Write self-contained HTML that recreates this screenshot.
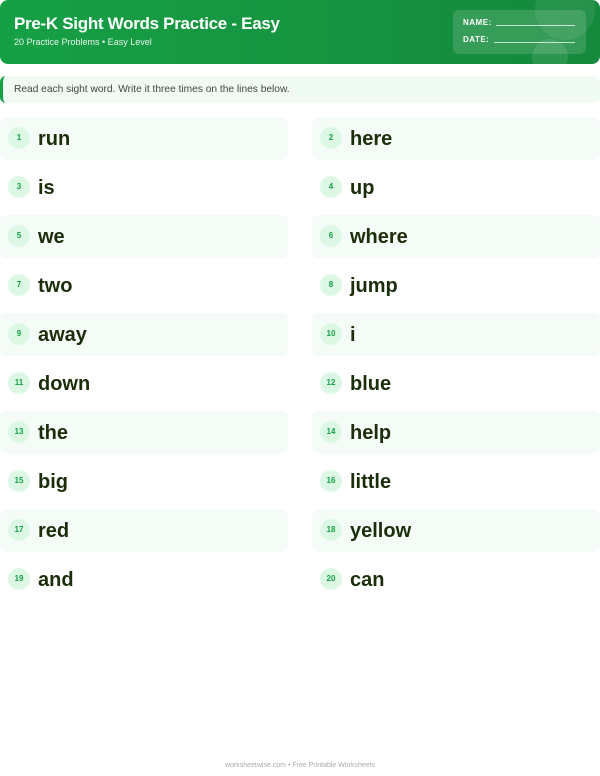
<!DOCTYPE html>
<html><head><meta charset="utf-8"><style>
*{margin:0;padding:0;box-sizing:border-box}
body{width:600px;height:776px;background:#fff;font-family:"Liberation Sans",sans-serif;position:relative;overflow:hidden}
.hdr{position:absolute;left:0;top:0;width:600px;height:64px;border-radius:8px;background:linear-gradient(90deg,#16a045,#15893c);overflow:hidden}
.hdr h1{position:absolute;left:14px;top:14px;color:#fff;font-size:17px;font-weight:bold;letter-spacing:-0.3px}
.hdr .sub{position:absolute;left:14px;top:37px;color:#e6f5ea;font-size:9px}
.c1{position:absolute;left:535px;top:-20px;width:60px;height:60px;border-radius:50%;background:rgba(255,255,255,0.08)}
.c2{position:absolute;left:532px;top:39px;width:36px;height:36px;border-radius:50%;background:rgba(255,255,255,0.1)}
.box{position:absolute;left:453px;top:10px;width:133px;height:44px;border-radius:6px;background:rgba(255,255,255,0.14)}
.box div{position:absolute;left:10px;color:#fff;font-size:8px;font-weight:bold;letter-spacing:0.5px}
.box span{position:absolute;border-bottom:1px solid rgba(255,255,255,0.7);height:1px}
.ins{position:absolute;left:0;top:76px;width:600px;height:27px;background:#f0fbf3;border-left:3px solid #16a045;border-radius:6px;font-size:10.2px;color:#444;padding:8px 0 0 11px}
.row{position:absolute;width:288px;height:43px;border-radius:6px}
.row.s{background:#f5fbf7}
.n{position:absolute;left:8px;top:10px;width:22px;height:22px;border-radius:50%;background:#dcf8e5;color:#16a045;font-size:8px;font-weight:bold;text-align:center;line-height:22px}
.w{position:absolute;left:38px;top:11px;font-size:20px;font-weight:bold;color:#1a2e0a}
.ft{position:absolute;top:762px;left:0;width:600px;text-align:center;font-size:7px;color:#aaa}
</style></head><body>
<div class="hdr"><h1>Pre-K Sight Words Practice - Easy</h1><div class="sub">20 Practice Problems • Easy Level</div>
<div class="c1"></div>
<div class="box"><div style="top:8px">NAME:</div><span style="left:43px;width:79px;top:15px"></span><div style="top:25px">DATE:</div><span style="left:41px;width:81px;top:32px"></span></div>
<div class="c2"></div></div>
<div class="ins">Read each sight word. Write it three times on the lines below.</div>
<div class="row s" style="left:0;top:117px"><div class="n">1</div><div class="w">run</div></div>
<div class="row s" style="left:312px;top:117px"><div class="n">2</div><div class="w">here</div></div>
<div class="row" style="left:0;top:166px"><div class="n">3</div><div class="w">is</div></div>
<div class="row" style="left:312px;top:166px"><div class="n">4</div><div class="w">up</div></div>
<div class="row s" style="left:0;top:215px"><div class="n">5</div><div class="w">we</div></div>
<div class="row s" style="left:312px;top:215px"><div class="n">6</div><div class="w">where</div></div>
<div class="row" style="left:0;top:264px"><div class="n">7</div><div class="w">two</div></div>
<div class="row" style="left:312px;top:264px"><div class="n">8</div><div class="w">jump</div></div>
<div class="row s" style="left:0;top:313px"><div class="n">9</div><div class="w">away</div></div>
<div class="row s" style="left:312px;top:313px"><div class="n">10</div><div class="w">i</div></div>
<div class="row" style="left:0;top:362px"><div class="n">11</div><div class="w">down</div></div>
<div class="row" style="left:312px;top:362px"><div class="n">12</div><div class="w">blue</div></div>
<div class="row s" style="left:0;top:411px"><div class="n">13</div><div class="w">the</div></div>
<div class="row s" style="left:312px;top:411px"><div class="n">14</div><div class="w">help</div></div>
<div class="row" style="left:0;top:460px"><div class="n">15</div><div class="w">big</div></div>
<div class="row" style="left:312px;top:460px"><div class="n">16</div><div class="w">little</div></div>
<div class="row s" style="left:0;top:509px"><div class="n">17</div><div class="w">red</div></div>
<div class="row s" style="left:312px;top:509px"><div class="n">18</div><div class="w">yellow</div></div>
<div class="row" style="left:0;top:558px"><div class="n">19</div><div class="w">and</div></div>
<div class="row" style="left:312px;top:558px"><div class="n">20</div><div class="w">can</div></div>
<div class="ft">worksheetwise.com • Free Printable Worksheets</div>
</body></html>
